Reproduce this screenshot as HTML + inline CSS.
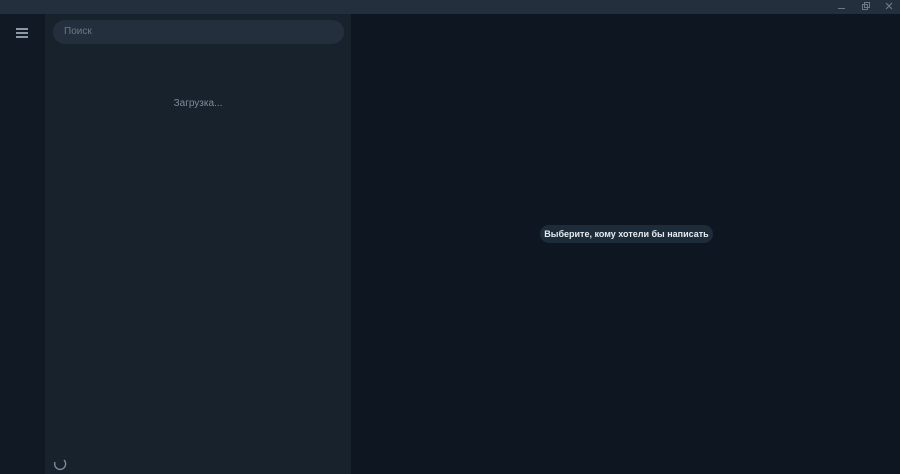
<!DOCTYPE html>
<html><head><meta charset="utf-8"><style>
*{margin:0;padding:0;box-sizing:border-box}
body{width:900px;height:474px;overflow:hidden;background:#0e1621;font-family:"Liberation Sans","DejaVu Sans",sans-serif;position:relative}
.title{position:absolute;left:0;top:0;width:900px;height:14px;background:#242f3d}
.left{position:absolute;left:0;top:14px;width:45px;height:460px;background:#111a24}
.panel{position:absolute;left:45px;top:14px;width:306px;height:460px;background:#18222d}
.main{position:absolute;left:351px;top:14px;width:549px;height:460px;background:#0e1621}
.search{position:absolute;left:53px;top:20px;width:291px;height:24px;border-radius:12px;background:#242f3d;color:#6c7883;font-size:10px;line-height:24px;padding-left:11px}
.load{position:absolute;left:45px;top:98px;width:306px;text-align:center;color:#7d8b98;font-size:10px}
.pill{position:absolute;left:540px;top:225px;width:173px;height:18px;border-radius:9px;background:#1e2c3a;color:#e6ecf0;font-size:9px;line-height:18px;font-weight:bold;white-space:nowrap;display:flex;justify-content:center}
.ham{position:absolute;left:16px;width:12px;height:1.5px;background:#8a97a4}
</style></head><body>
<div class="title"></div>
<div class="left"></div>
<div class="panel"></div>
<div class="main"></div>
<div class="ham" style="top:28px"></div>
<div class="ham" style="top:32px"></div>
<div class="ham" style="top:36px"></div>
<div class="search">Поиск</div>
<div class="load">Загрузка...</div>
<div class="pill"><span>Выберите, кому хотели бы написать</span></div>
<svg style="position:absolute;left:0;top:0" width="900" height="474">
<line x1="838" y1="8.5" x2="845" y2="8.5" stroke="#6c7883" stroke-width="1"/>
<rect x="862.5" y="4.5" width="5" height="5" fill="none" stroke="#6c7883"/>
<rect x="864.5" y="2.5" width="5" height="5" fill="none" stroke="#6c7883"/>
<path d="M886 3L892 9M892 3L886 9" stroke="#6c7883" stroke-width="1.2"/>
<path d="M55 462 A5.5 5.5 0 1 0 64 460" fill="none" stroke="#7d8b98" stroke-width="1.4"/>
</svg>
</body></html>
